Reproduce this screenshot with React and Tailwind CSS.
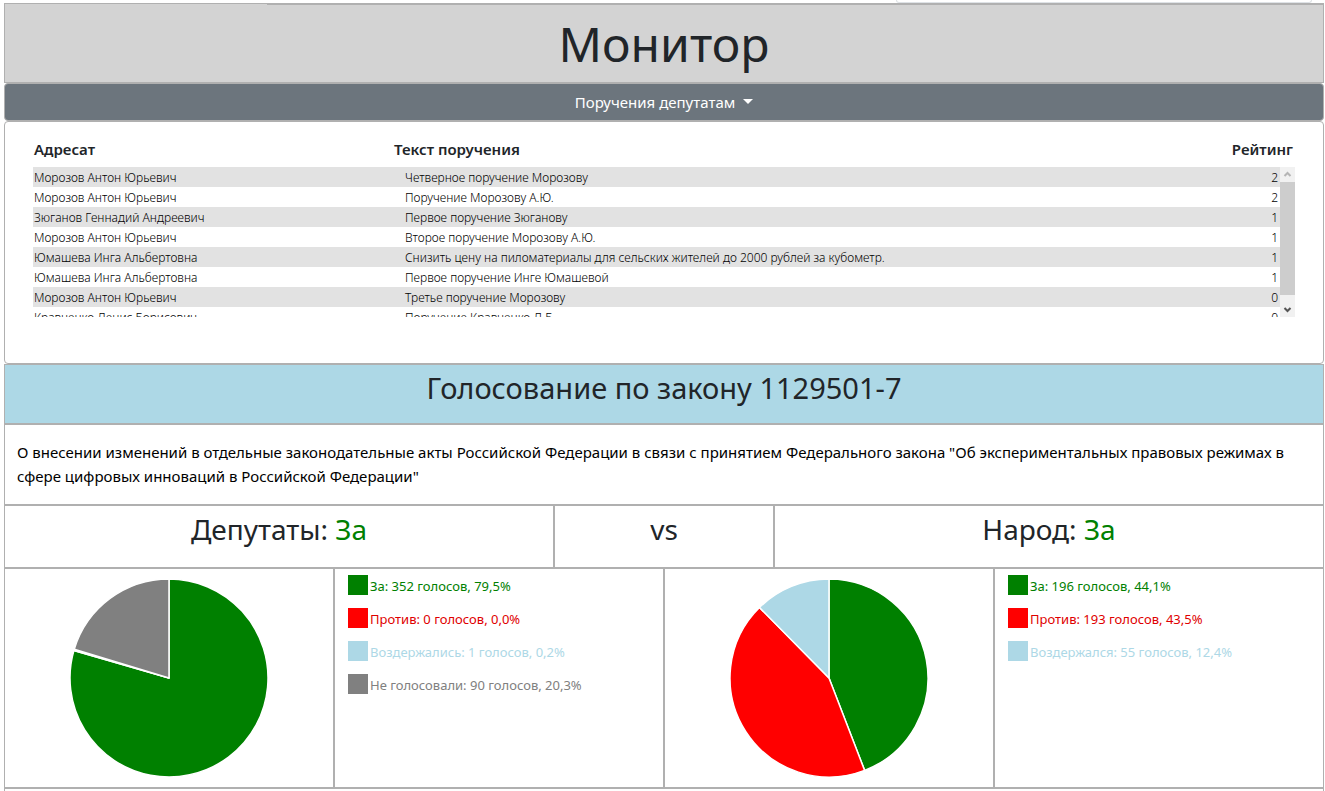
import React from "react";

const requests = [
  ["Морозов Антон Юрьевич", "Четверное поручение Морозову", 2],
  ["Морозов Антон Юрьевич", "Поручение Морозову А.Ю.", 2],
  ["Зюганов Геннадий Андреевич", "Первое поручение Зюганову", 1],
  ["Морозов Антон Юрьевич", "Второе поручение Морозову А.Ю.", 1],
  ["Юмашева Инга Альбертовна", "Снизить цену на пиломатериалы для сельских жителей до 2000 рублей за кубометр.", 1],
  ["Юмашева Инга Альбертовна", "Первое поручение Инге Юмашевой", 1],
  ["Морозов Антон Юрьевич", "Третье поручение Морозову", 0],
  ["Кравченко Денис Борисович", "Поручение Кравченко Д.Б.", 0],
];

const deputies = [
  { label: "За", votes: 352, share: "79,5%", fill: "fill-[#008000]", bg: "bg-[#008000]", text: "text-[#008000]" },
  { label: "Против", votes: 0, share: "0,0%", fill: "fill-[#ff0000]", bg: "bg-[#ff0000]", text: "text-[#e00000]" },
  { label: "Воздержались", votes: 1, share: "0,2%", fill: "fill-[#add8e6]", bg: "bg-[#add8e6]", text: "text-[#add8e6]" },
  { label: "Не голосовали", votes: 90, share: "20,3%", fill: "fill-[#808080]", bg: "bg-[#808080]", text: "text-[#808080]" },
];

const people = [
  { label: "За", votes: 196, share: "44,1%", fill: "fill-[#008000]", bg: "bg-[#008000]", text: "text-[#008000]" },
  { label: "Против", votes: 193, share: "43,5%", fill: "fill-[#ff0000]", bg: "bg-[#ff0000]", text: "text-[#e00000]" },
  { label: "Воздержался", votes: 55, share: "12,4%", fill: "fill-[#add8e6]", bg: "bg-[#add8e6]", text: "text-[#add8e6]" },
];

function Pie({ data, title }) {
  const total = data.reduce((sum, d) => sum + d.votes, 0);
  let start = 0;
  const point = (part) => {
    const a = part * 2 * Math.PI;
    return `${100 + 99 * Math.sin(a)} ${100 - 99 * Math.cos(a)}`;
  };
  const slices = data
    .filter((d) => d.votes > 0)
    .map((d) => {
      const end = start + d.votes / total;
      const path = `M100 100 L${point(start)} A99 99 0 ${end - start > 0.5 ? 1 : 0} 1 ${point(end)} Z`;
      start = end;
      return <path key={d.label} d={path} className={d.fill} stroke="white" strokeWidth="1.5" strokeLinejoin="round" />;
    });
  return (
    <div className="flex items-center justify-center border border-[#b0b0b0]">
      <svg viewBox="0 0 200 200" className="h-[200px] w-[200px]" role="img" aria-label={title}>
        {slices}
      </svg>
    </div>
  );
}

function Legend({ data }) {
  return (
    <ul className="flex flex-col gap-[13px] border border-[#b0b0b0] px-[13px] py-1.5">
      {data.map((d) => (
        <li key={d.label} className="flex h-5 items-center gap-0.5 text-[13px]">
          <span className={`h-5 w-5 shrink-0 ${d.bg}`} />
          <span className={`whitespace-nowrap pt-0.5 leading-5 ${d.text}`}>
            {d.label}: {d.votes} голосов, {d.share}
          </span>
        </li>
      ))}
    </ul>
  );
}

function Requests() {
  return (
    <section className="rounded border border-[#b0b0b0] px-7 pt-[15px] pb-[46px]">
      <div className="relative">
        <table className="block w-full">
          <thead className="block">
            <tr className="flex h-[30px] text-left text-[15px] leading-6 text-[#212529]">
              <th className="w-[360px] shrink-0 px-px font-semibold">Адресат</th>
              <th className="flex-1 px-px font-semibold">Текст поручения</th>
              <th className="px-0.5 font-semibold">Рейтинг</th>
            </tr>
          </thead>
          <tbody className="block h-[150px] overflow-y-auto pr-[15px] text-xs font-light [scrollbar-width:none]">
            {requests.map(([name, text, rating], i) => (
              <tr key={i} className="flex h-5 pt-px leading-5 odd:bg-[#e2e2e2]">
                <td className="w-[371px] shrink-0 px-px text-black">{name}</td>
                <td className="flex-1 px-px text-black">{text}</td>
                <td className="px-0.5 text-black">{rating}</td>
              </tr>
            ))}
          </tbody>
        </table>
        <div className="absolute right-0 bottom-0 flex h-[150px] w-[15px] flex-col bg-[#f1f1f1]" aria-hidden="true">
          <svg viewBox="0 0 15 15" className="h-[15px] w-[15px]">
            <path d="M4.5 9 L7.5 6 L10.5 9" fill="none" stroke="#b5b5b5" strokeWidth="2" />
          </svg>
          <span className="h-[113px] bg-[#cdcdcd]" />
          <span className="flex-1" />
          <svg viewBox="0 0 15 15" className="h-[15px] w-[15px]">
            <path d="M4.5 6 L7.5 9 L10.5 6" fill="none" stroke="#555555" strokeWidth="2" />
          </svg>
        </div>
      </div>
    </section>
  );
}

export default function App() {
  return (
    <main className="min-h-screen bg-white pr-px pl-1 font-['Noto_Sans',sans-serif] text-[#212529]">
      <div className="flex h-[3px] justify-end pr-3">
        <div className="w-[416px] rounded-b border border-t-0 border-[#dee2e6]" />
      </div>

      <header className="border border-[#b0b0b0] bg-[#d3d3d3]">
        <div className="ml-[262px] h-px bg-[#b0b0b0]" />
        <h1 className="h-[77px] text-center text-[48px] leading-[77px]">Монитор</h1>
      </header>

      <button
        type="button"
        className="flex h-[38px] w-full items-center justify-center gap-2 rounded border border-[#b0b0b0] bg-[#6c757d] text-[15px] leading-6 text-white"
      >
        Поручения депутатам
        <svg viewBox="0 0 10 5" className="mb-0.5 h-[5px] w-[10px]" fill="currentColor" aria-hidden="true">
          <path d="M0 0 H10 L5 5 Z" />
        </svg>
      </button>

      <Requests />

      <h2 className="h-[60px] border border-[#b0b0b0] bg-[#add8e6] pt-[3px] text-center text-[29px] leading-10">
        Голосование по закону 1129501-7
      </h2>

      <p className="border border-[#b0b0b0] px-3 pt-[15px] pb-4 text-[15px] leading-6 text-black">
        О внесении изменений в отдельные законодательные акты Российской Федерации в связи с принятием Федерального закона
        "Об экспериментальных правовых режимах в сфере цифровых инноваций в Российской Федерации"
      </p>

      <div className="grid h-[63px] grid-cols-12 text-center text-[28px] leading-10">
        <h3 className="col-span-5 border border-[#b0b0b0] pt-[3px]">
          Депутаты: <span className="text-[#008000]">За</span>
        </h3>
        <div className="col-span-2 border border-[#b0b0b0] pt-[3px]">vs</div>
        <h3 className="col-span-5 border border-[#b0b0b0] pt-[3px]">
          Народ: <span className="text-[#008000]">За</span>
        </h3>
      </div>

      <div className="grid h-[220px] grid-cols-4">
        <Pie data={deputies} title="Голоса депутатов" />
        <Legend data={deputies} />
        <Pie data={people} title="Голоса народа" />
        <Legend data={people} />
      </div>

      <div className="h-[3px] border border-b-0 border-[#b0b0b0]" />
    </main>
  );
}
